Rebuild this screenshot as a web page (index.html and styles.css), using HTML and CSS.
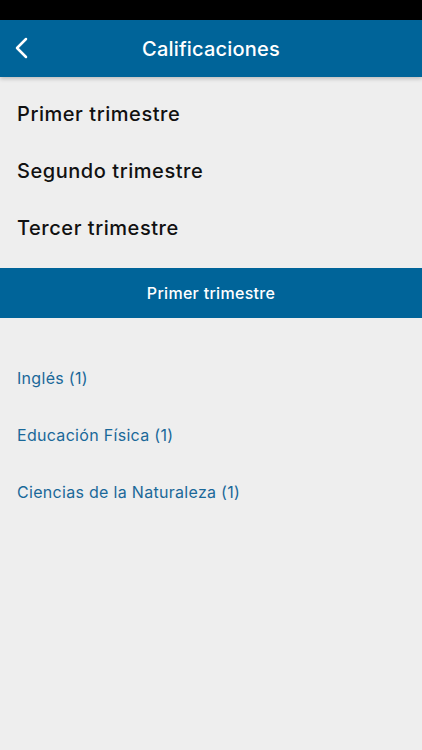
FILE: index.html
```html
<!DOCTYPE html>
<html lang="es">
<head>
  <meta charset="UTF-8" />
  <meta name="viewport" content="width=device-width, initial-scale=1.0" />
  <title>Calificaciones</title>
  <link rel="stylesheet" href="styles.css">
</head>
<body>
  <div class="status-bar"></div>
  <header class="topbar">
    <a class="back" href="#">
      <svg width="16" height="22" viewBox="0 0 16 22">
        <path d="M12 2 L3 11 L12 20" fill="none" stroke="#fff" stroke-width="2.5" stroke-linecap="round" stroke-linejoin="round"/>
      </svg>
    </a>
    <h1>Calificaciones</h1>
  </header>

  <nav class="terms">
    <a href="#">Primer trimestre</a>
    <a href="#">Segundo trimestre</a>
    <a href="#">Tercer trimestre</a>
  </nav>

  <div class="selected">Primer trimestre</div>

  <ul class="subjects">
    <li><a href="#">Inglés (1)</a></li>
    <li><a href="#">Educación Física (1)</a></li>
    <li><a href="#">Ciencias de la Naturaleza (1)</a></li>
  </ul>
</body>
</html>
```

FILE: styles.css
```css
body {
  font-family: Inter, "Noto Sans", sans-serif;
  background-color: #eeeeee;
  margin: 0;
  padding: 0;
  min-height: 100vh;
}
.status-bar {
  height: 20px;
  background-color: #000;
}
.topbar {
  height: 57px;
  background-color: #006499;
  color: #fff;
  display: flex;
  align-items: center;
  justify-content: center;
  position: relative;
  box-shadow: 0 2px 4px rgba(0, 0, 0, 0.2);
}
.topbar h1 {
  margin: 0;
  font-size: 20px;
  font-weight: 500;
  letter-spacing: 0.2px;
}
.back {
  position: absolute;
  left: 14px;
  top: 17px;
  display: flex;
}
.terms {
  display: flex;
  flex-direction: column;
  padding: 8px 0 12px;
}
.terms a {
  height: 57px;
  display: flex;
  align-items: center;
  padding: 0 17px;
  color: #111;
  text-decoration: none;
  font-size: 20px;
  font-weight: 500;
  letter-spacing: 0.55px;
}
.selected {
  height: 50px;
  background-color: #006499;
  color: #fff;
  display: flex;
  align-items: center;
  justify-content: center;
  font-size: 16px;
  font-weight: 500;
  letter-spacing: 0.3px;
}
.subjects {
  list-style: none;
  margin: 0;
  padding: 31px 0 0;
}
.subjects li {
  height: 57px;
  display: flex;
  align-items: center;
  padding: 0 17px;
}
.subjects a {
  color: #1a6899;
  text-decoration: none;
  font-size: 16px;
  letter-spacing: 0.3px;
}
```
